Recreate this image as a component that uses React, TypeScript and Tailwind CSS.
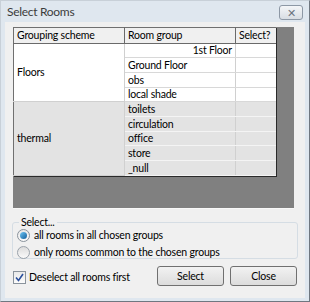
import React from 'react';

const font = { fontFamily: 'Lato, "Noto Sans", sans-serif' };

type Row = { name: string; h: number; right?: boolean };

const floors: Row[] = [
  { name: '1st Floor', h: 14, right: true },
  { name: 'Ground Floor', h: 15 },
  { name: 'obs', h: 15 },
  { name: 'local shade', h: 14 },
];

const thermal: Row[] = [
  { name: 'toilets', h: 15 },
  { name: 'circulation', h: 15 },
  { name: 'office', h: 14 },
  { name: 'store', h: 15 },
  { name: '_null', h: 15 },
];

function Group({ label, rows, shaded }: { label: string; rows: Row[]; shaded: boolean }) {
  const bg = shaded ? 'bg-[#e3e3e3]' : 'bg-white';
  const line = shaded ? 'border-[#f4f4f4]' : 'border-[#d8d8d8]';
  return (
    <>
      {rows.map((r, i) => (
        <tr key={r.name} style={{ height: r.h }}>
          {i === 0 && (
            <td
              rowSpan={rows.length}
              className={`${bg} border-r border-b border-[#d0d0d0] pl-[3px] align-middle`}
            >
              {label}
            </td>
          )}
          <td
            className={`${bg} border-b ${line} border-r border-r-[#d0d0d0] px-[3px] leading-none ${
              r.right ? 'text-right' : ''
            }`}
          >
            {r.name}
          </td>
          <td className={`${bg} border-b ${line}`}></td>
        </tr>
      ))}
    </>
  );
}

export default function App() {
  return (
    <div
      className="w-[310px] h-[302px] bg-[#dfe7ef] border-l border-t border-l-[#c8d0d8] border-t-[#c8d0d8] border-r border-b border-r-[#6f7780] border-b-[#6f7780] flex flex-col text-[10.5px] tracking-[-0.2px] text-black"
      style={font}
    >
      <div className="h-[21px] flex items-center justify-between pl-[6px] pr-[6px]">
        <span className="text-[12px] tracking-[-0.3px] text-[#3c3c3c]">Select Rooms</span>
        <div className="w-[24px] h-[15px] mt-[1px] rounded-[3px] border border-[#8d98a5] bg-gradient-to-b from-[#f4f6f8] to-[#d8dde3] flex items-center justify-center text-[#6b7480] text-[11px] leading-none">
          ✕
        </div>
      </div>

      <div className="flex-1 mx-[4px] mb-[3px] bg-[#f0f0f0] flex flex-col px-[8px] pt-[5px]">
        <div className="h-[182px] shrink-0 bg-[#808080] border-b border-[#f8f8f8] w-[281px]">
          <table className="w-[262px] border-collapse table-fixed bg-white border-l border-t border-[#707070] shadow-[1px_1px_0_#2a2a2a]">
            <colgroup>
              <col className="w-[111px]" />
              <col className="w-[111px]" />
              <col className="w-[40px]" />
            </colgroup>
            <thead>
              <tr className="h-[16px] bg-[#f0f0f0]">
                <th className="font-normal text-left pl-[3px] border-r border-b border-[#6a6a6a] leading-none">
                  Grouping scheme
                </th>
                <th className="font-normal text-left pl-[3px] border-r border-b border-[#6a6a6a] leading-none">
                  Room group
                </th>
                <th className="font-normal text-left pl-[3px] border-b border-[#6a6a6a] leading-none">
                  Select?
                </th>
              </tr>
            </thead>
            <tbody>
              <Group label="Floors" rows={floors} shaded={false} />
              <Group label="thermal" rows={thermal} shaded={true} />
            </tbody>
          </table>
        </div>

        <fieldset className="mt-[8px] h-[42px] shrink-0 border border-[#d5dde4] rounded-[3px] pl-[4px] pr-[4px] pb-[2px] -mx-[1px]">
          <legend className="px-[2px] ml-[2px] leading-none">Select...</legend>
          <div className="flex flex-col gap-[4px] mt-[1px]">
            <label className="flex items-center gap-[4px] leading-none">
              <span className="w-[13px] h-[13px] rounded-full border border-[#8a939c] bg-gradient-to-b from-[#e8e8e8] to-[#fafafa] flex items-center justify-center">
                <span className="w-[7px] h-[7px] rounded-full bg-gradient-to-br from-[#6ec6f4] to-[#0f5f9c]" />
              </span>
              all rooms in all chosen groups
            </label>
            <label className="flex items-center gap-[4px] leading-none">
              <span className="w-[13px] h-[13px] rounded-full border border-[#9aa2aa] bg-gradient-to-b from-[#dcdcdc] to-[#fafafa]" />
              only rooms common to the chosen groups
            </label>
          </div>
        </fieldset>

        <div className="flex items-center mt-[7px]">
          <label className="flex items-center gap-[3px] flex-1 leading-none pt-[2px]">
            <span className="w-[13px] h-[13px] border border-[#8a939c] bg-gradient-to-b from-[#eaeaea] to-[#fbfbfb] flex items-center justify-center">
              <svg width="9" height="9" viewBox="0 0 9 9">
                <path d="M1 4.5 L3.5 7.5 L8 1" fill="none" stroke="#2a4f9c" strokeWidth="1.6" />
              </svg>
            </span>
            Deselect all rooms first
          </label>
          <button className="w-[67px] h-[20px] rounded-[3px] border border-[#707070] bg-gradient-to-b from-[#f2f2f2] to-[#dcdcdc] leading-none">
            Select
          </button>
          <button className="w-[67px] h-[20px] ml-[6px] rounded-[3px] border border-[#707070] bg-gradient-to-b from-[#f2f2f2] to-[#dcdcdc] leading-none">
            Close
          </button>
        </div>
      </div>
    </div>
  );
}
